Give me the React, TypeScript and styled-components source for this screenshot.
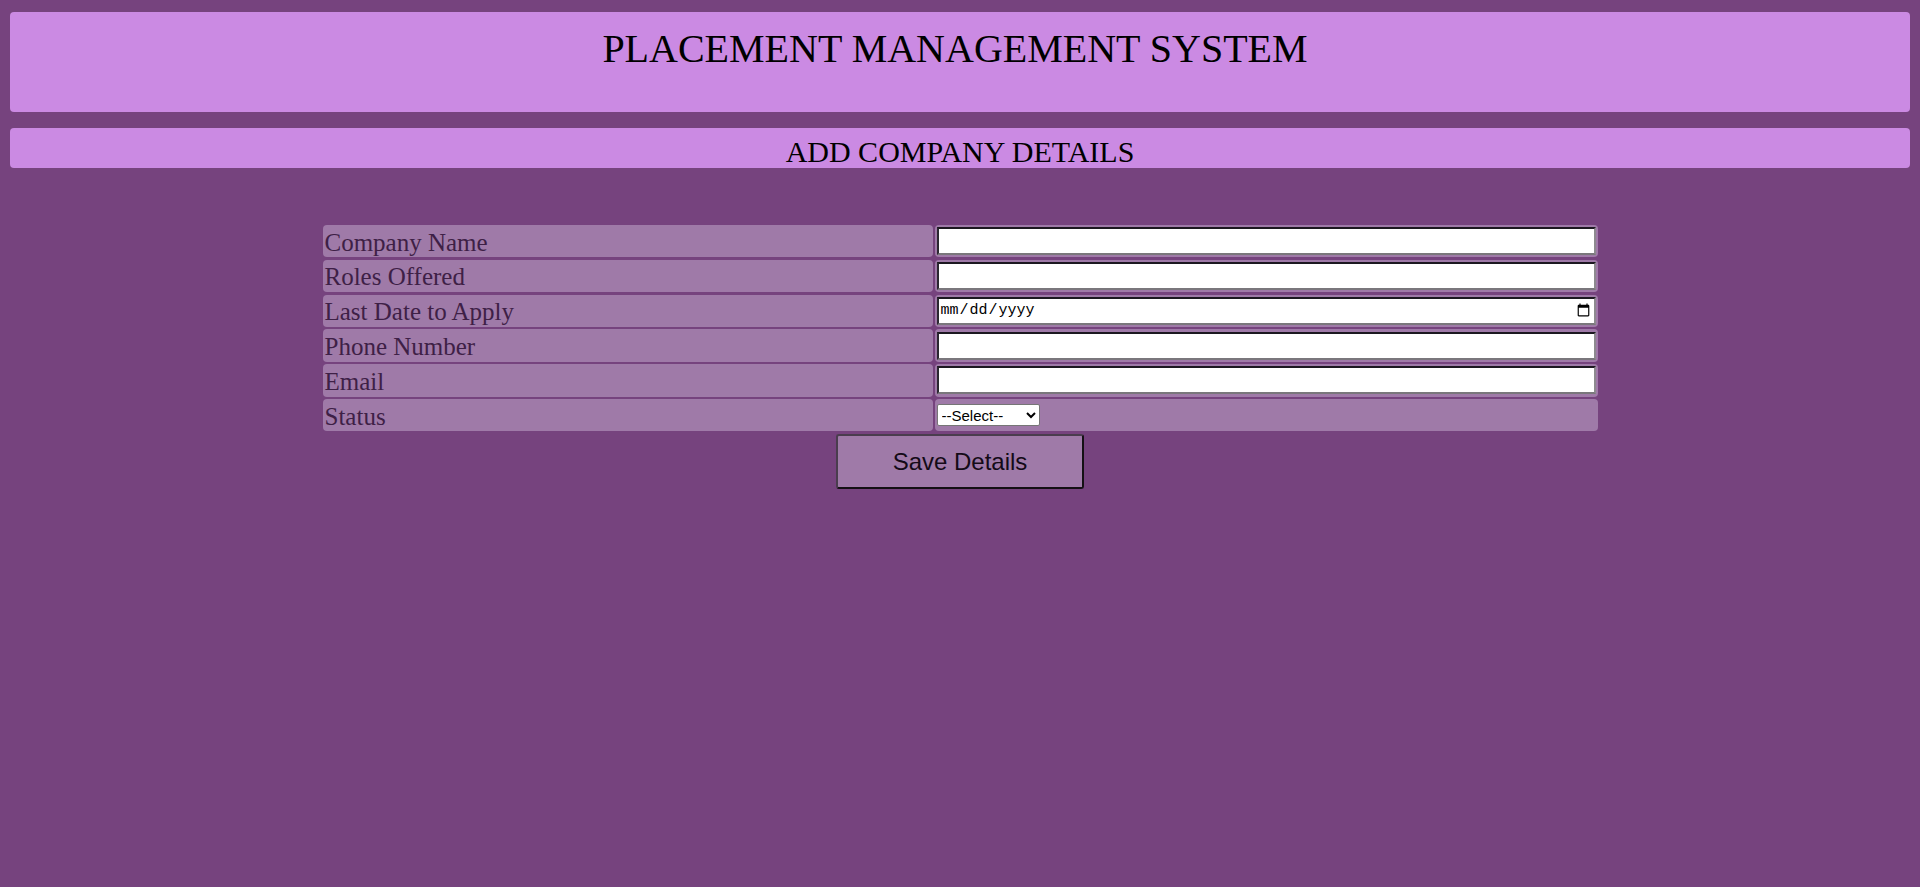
import React from "react";
import styled, { createGlobalStyle } from "styled-components";

const GlobalStyle = createGlobalStyle`
  html, body {
    background: #76437e;
  }
  body {
    margin: 8px;
    font-family: "Liberation Serif", "Times New Roman", serif;
  }
`;

const Banner = styled.header`
  margin: 4px 2px 0;
  height: 100px;
  box-sizing: border-box;
  padding: 14px 10px 0 0;
  background: #cb8ae3;
  border-radius: 4px;
  text-align: center;
`;

const Title = styled.h1`
  margin: 0;
  font-family: "Liberation Serif", "Times New Roman", serif;
  font-weight: normal;
  font-size: 40px;
  line-height: 46px;
  color: #000;
`;

const SubBar = styled.div`
  margin: 16px 2px 0;
  height: 40px;
  box-sizing: border-box;
  padding-top: 9px;
  background: #cb8ae3;
  border-radius: 4px;
  text-align: center;
`;

const SubTitle = styled.h2`
  margin: 0;
  font-family: "Liberation Serif", "Times New Roman", serif;
  font-weight: normal;
  font-size: 30px;
  line-height: 30px;
  color: #000;
`;

const Form = styled.form`
  display: flex;
  flex-direction: column;
  align-items: center;
  margin-top: 57px;
`;

const Grid = styled.div`
  display: grid;
  grid-template-columns: 610px 663px;
  column-gap: 2px;
  row-gap: 2.4px;
  width: 1275px;
`;

const Cell = styled.div`
  box-sizing: border-box;
  height: 32.4px;
  padding: 2px;
  background: #9f7aa8;
  border-radius: 4px;
  display: flex;
  align-items: center;
`;

const Label = styled.label`
  font-family: "Liberation Serif", Cambria, serif;
  font-size: 25px;
  line-height: 28px;
  color: #3e2046;
  margin-top: 3px;
`;

const TextInput = styled.input`
  box-sizing: border-box;
  width: 100%;
  height: 28px;
  margin: 0;
  padding: 1px 1px;
  background: #fff;
  border-style: solid;
  border-width: 2px;
  border-color: #1c1820 #8d8a8f #7a777c #2a2630;
  border-radius: 0;
  font-family: "Liberation Mono", "Courier New", monospace;
  font-size: 15px;
  color: #000;
  outline: none;
`;

const Select = styled.select`
  box-sizing: border-box;
  width: 103px;
  height: 22px;
  margin: 0;
  font-family: "Liberation Sans", Arial, sans-serif;
  font-size: 15px;
  background: #fff;
  color: #000;
  border: 1px solid #767676;
  border-radius: 2px;
`;

const SaveButton = styled.button`
  margin-top: 3px;
  width: 248px;
  height: 55px;
  box-sizing: border-box;
  background: #9f7aa8;
  border-style: solid;
  border-width: 2px;
  border-color: #4a3d4e #141014 #141014 #4a3d4e;
  border-radius: 3px;
  font-family: "Liberation Sans", Arial, sans-serif;
  font-size: 24px;
  color: #140a17;
  cursor: pointer;
`;

type Field = { label: string; name: string; type: string };

const fields: Field[] = [
  { label: "Company Name", name: "cname", type: "text" },
  { label: "Roles Offered", name: "roles", type: "text" },
  { label: "Last Date to Apply", name: "lastdate", type: "date" },
  { label: "Phone Number", name: "phone", type: "text" },
  { label: "Email", name: "email", type: "text" },
];

export default function App() {
  return (
    <>
      <GlobalStyle />
      <Banner>
        <Title>PLACEMENT MANAGEMENT SYSTEM</Title>
      </Banner>
      <SubBar>
        <SubTitle>ADD COMPANY DETAILS</SubTitle>
      </SubBar>
      <Form onSubmit={(e) => e.preventDefault()}>
        <Grid>
          {fields.map((f) => (
            <React.Fragment key={f.name}>
              <Cell>
                <Label htmlFor={f.name}>{f.label}</Label>
              </Cell>
              <Cell>
                <TextInput id={f.name} name={f.name} type={f.type} />
              </Cell>
            </React.Fragment>
          ))}
          <Cell>
            <Label htmlFor="status">Status</Label>
          </Cell>
          <Cell>
            <Select id="status" name="status" defaultValue="">
              <option value="">--Select--</option>
              <option value="open">Open</option>
              <option value="closed">Closed</option>
            </Select>
          </Cell>
        </Grid>
        <SaveButton type="submit">Save Details</SaveButton>
      </Form>
    </>
  );
}
